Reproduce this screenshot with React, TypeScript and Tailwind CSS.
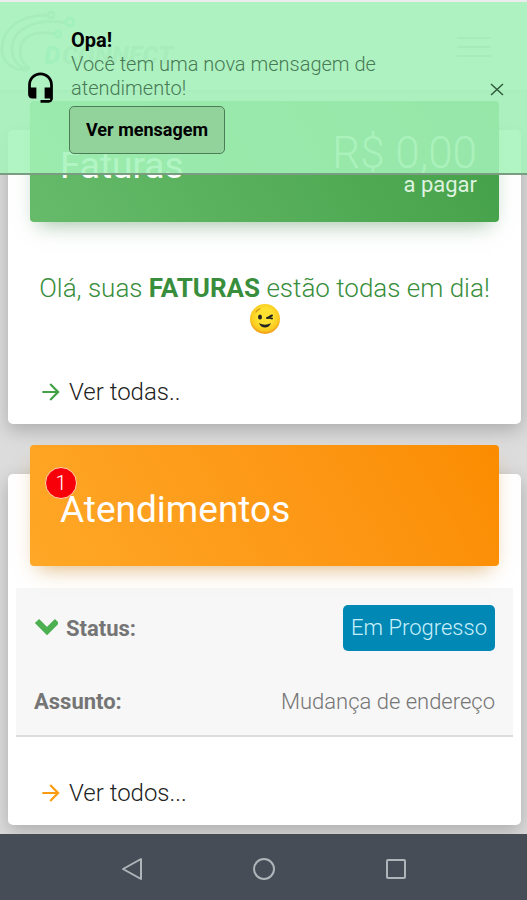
import React from 'react'
import { MdArrowForward, MdHeadsetMic } from 'react-icons/md'

function Logo (): React.ReactElement {
  return (
    <svg viewBox="0 0 180 76" className="w-[180px] h-[76px]" role="img" aria-label="DConnect">
      <g fill="none" stroke="#b3c3c2" strokeWidth="3">
        <path d="M47 11C20 11 1 25 2 47c1 12 12 20 26 19" />
        <path d="M66 19C32 13 12 27 12 45c0 11 7 18 16 21" />
        <path d="M54 30C32 25 20 35 20 47c0 8 4 14 10 18" />
        <circle cx="51" cy="11" r="3" />
        <circle cx="70" cy="18" r="4" stroke="#8fdcd2" />
        <circle cx="58" cy="30" r="3" stroke="#8fdcd2" />
      </g>
      <text x="44" y="60" className="font-['Roboto'] text-[26px] font-black italic" fill="#8fdcd2">D</text>
      <text x="62" y="60" className="font-['Roboto'] text-[25px] font-black italic" fill="#b3c3c2">CONNECT</text>
    </svg>
  )
}

function Wink (): React.ReactElement {
  return (
    <svg viewBox="0 0 32 32" className="w-8 h-8" role="img" aria-label="😉">
      <defs>
        <radialGradient id="face" cx="50%" cy="42%" r="55%">
          <stop offset="0.5" stopColor="#fde030" />
          <stop offset="0.85" stopColor="#fbc91f" />
          <stop offset="1" stopColor="#f0a01c" />
        </radialGradient>
      </defs>
      <circle cx="16" cy="15" r="15" fill="url(#face)" />
      <path d="M7 8c1-2 2-2.500 4-3" fill="none" stroke="#cf8a12" strokeWidth="1.200" strokeLinecap="round" />
      <ellipse cx="11" cy="13" rx="2" ry="2.500" fill="#222" />
      <path d="M18 14c2-.5 3-2 5-2.500M18 14c2-.5 3.500-.5 5 .5" fill="none" stroke="#222" strokeWidth="2" strokeLinecap="round" />
      <path d="M10 19c4 2.200 8 2.200 12 0-1 3-3.500 4.500-6 4.500S11 22 10 19z" fill="#222" />
    </svg>
  )
}

function Notice (): React.ReactElement {
  return (
    <div role="alert" className="absolute inset-x-0 top-0.5 flex items-center h-[173px] pl-6 pr-5 bg-[#a5f3ba]/85 border-b-2 border-[#7a9c80] text-black">
      <MdHeadsetMic className="size-[33px] shrink-0" />
      <div className="flex-1 pt-1.5 pl-3.5">
        <p className="text-xl leading-6 font-bold">Opa!</p>
        <p className="max-w-[340px] text-[20px] leading-6 font-light text-[#477a55]">Você tem uma nova mensagem de atendimento!</p>
        <button type="button" className="mt-1.5 -ml-0.5 h-12 px-4 rounded-[5px] border border-[#4c7d58] bg-[#92d39c] text-[18px] font-bold">Ver mensagem</button>
      </div>
      <button type="button" aria-label="Fechar" className="mt-1">
        <svg viewBox="0 0 20 20" className="size-5" fill="none" stroke="#315b3c" strokeWidth="1.500">
          <path d="M4 4l12 11M16 4L4 15" />
        </svg>
      </button>
    </div>
  )
}

export default function App (): React.ReactElement {
  return (
    <div className="relative flex flex-col min-h-screen bg-[#dcdcdc] font-['Roboto',sans-serif] font-light">
      <header className="flex justify-between h-[90px] pr-9 pt-1 bg-[#ececec] shadow">
        <Logo />
        <button type="button" aria-label="Menu" className="flex flex-col justify-center gap-[7px] w-[34px] h-[86px]">
          <span className="h-0.5 bg-[#b4bcb8]" />
          <span className="h-0.5 bg-[#b4bcb8]" />
          <span className="h-0.5 bg-[#b4bcb8]" />
        </button>
      </header>

      <main className="flex-1 flex flex-col gap-[50px] pl-2 pr-1.5 pt-10 pb-2">
        <section className="px-[22px] pb-4 rounded-[5px] bg-white shadow-[0_6px_18px_rgba(0,0,0,0.22)]">
          <div className="flex justify-between h-[121px] -mt-[29px] pl-[30px] pr-[22px] rounded-[4px] bg-linear-60 from-[#66bb6a] to-[#43a047] text-white shadow-[0_10px_20px_-8px_rgba(60,130,70,0.5)]">
            <h2 className="pt-[43px] text-[37px] leading-[44px] font-normal">Faturas</h2>
            <div className="pt-8 text-right">
              <p className="text-[44px] leading-[40px] text-white/70">R$ 0,00</p>
              <p className="text-[22px] leading-6 font-normal text-[#dff3e0]">a pagar</p>
            </div>
          </div>
          <p className="-mx-1 pt-[50px] text-[26px] leading-8 text-center text-[#388e3c]">
            Olá, suas <strong className="font-bold">FATURAS</strong> estão todas em dia!
            <span className="flex justify-center"><Wink /></span>
          </p>
          <a href="#faturas" className="flex items-center gap-[5px] mt-10 pl-2 text-[24px] leading-8 text-[#222]">
            <MdArrowForward className="size-[26px] text-[#43a047]" />
            Ver todas..
          </a>
        </section>

        <section className="px-2 pb-4 rounded-[5px] bg-white shadow-[0_6px_18px_rgba(0,0,0,0.22)]">
          <div className="relative h-[121px] -mt-[29px] mx-3.5 pl-[30px] rounded-[4px] bg-linear-60 from-[#ffa726] to-[#fb8c00] text-white shadow-[0_10px_20px_-8px_rgba(200,130,30,0.6)]">
            <h2 className="pt-[43px] text-[37px] leading-[44px] font-normal">Atendimentos</h2>
            <span className="absolute left-[15px] top-[22px] flex items-center justify-center size-8 rounded-full border border-[#ffd9b0] bg-[#f7000a] text-[20px]">1</span>
          </div>
          <dl className="flex flex-col mt-[22px] px-[18px] pt-[17px] border-b-2 border-[#dcdcdc] bg-[#f7f7f7] text-[22px] text-[#757575]">
            <div className="flex items-center justify-between">
              <dt className="flex items-center gap-2 font-bold">
                <svg viewBox="0 0 24 24" className="size-6" fill="none" stroke="#4caf50" strokeWidth="6">
                  <path d="M3 5l10 10 10-10" />
                </svg>
                Status:
              </dt>
              <dd className="h-[46px] px-2 rounded-[5px] bg-[#0288b5] leading-[46px] text-[#c8f0fa]">Em Progresso</dd>
            </div>
            <div className="flex items-center justify-between h-[84px] pt-[17px]">
              <dt className="font-bold">Assunto:</dt>
              <dd>Mudança de endereço</dd>
            </div>
          </dl>
          <a href="#atendimentos" className="flex items-center gap-[5px] mt-10 pl-[22px] text-[24px] leading-8 text-[#222]">
            <MdArrowForward className="size-[26px] text-[#fb9c10]" />
            Ver todos...
          </a>
        </section>
      </main>

      <nav className="flex justify-center items-center gap-[104px] h-[66px] pt-1 bg-[#464d56] text-[#b0b5ba]">
        <button type="button" aria-label="Voltar">
          <svg viewBox="0 0 28 28" className="size-7" fill="none" stroke="currentColor" strokeWidth="2" strokeLinejoin="round"><path d="M23 4v20L5 14z" /></svg>
        </button>
        <button type="button" aria-label="Início">
          <svg viewBox="0 0 28 28" className="size-7" fill="none" stroke="currentColor" strokeWidth="2"><circle cx="14" cy="14" r="10" /></svg>
        </button>
        <button type="button" aria-label="Recentes">
          <svg viewBox="0 0 28 28" className="size-7" fill="none" stroke="currentColor" strokeWidth="2"><rect x="5" y="5" width="18" height="18" rx="1" /></svg>
        </button>
      </nav>

      <Notice />
    </div>
  )
}
